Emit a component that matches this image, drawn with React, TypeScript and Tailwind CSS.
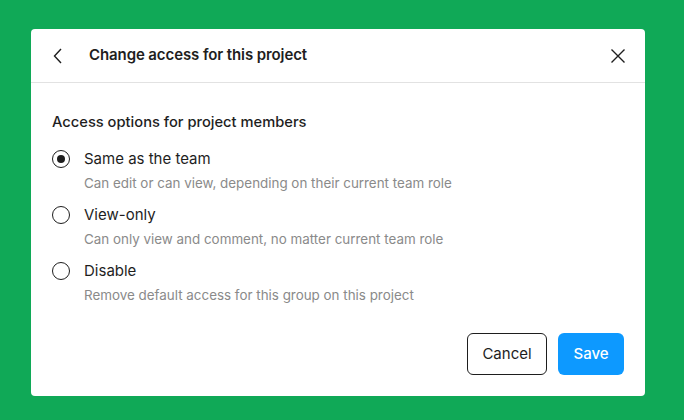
import React, { useState } from 'react';

const options = [
  { id: 'team', label: 'Same as the team', desc: 'Can edit or can view, depending on their current team role' },
  { id: 'view', label: 'View-only', desc: 'Can only view and comment, no matter current team role' },
  { id: 'disable', label: 'Disable', desc: 'Remove default access for this group on this project' },
];

const App: React.FC = () => {
  const [selected, setSelected] = useState('team');

  return (
    <div className="w-[684px] h-[420px] bg-[#10a957] pt-[29px] pl-[31px] font-['Inter',sans-serif]">
      <div className="w-[614px] h-[367px] bg-white rounded-[4px] flex flex-col">
        <div className="h-[54px] flex items-center border-b border-[#e2e2e2] pl-[20px] pr-[18px]">
          <button className="w-[14px] h-[20px] flex items-center justify-center text-[#1e1e1e]">
            <svg width="10" height="16" viewBox="0 0 10 16" fill="none" stroke="currentColor" strokeWidth="1.4">
              <path d="M8 1 L1.5 8 L8 15" />
            </svg>
          </button>
          <h1 className="ml-[24px] text-[15px] font-semibold text-[#1e1e1e] tracking-[-0.1px]">Change access for this project</h1>
          <button className="ml-auto w-[18px] h-[18px] flex items-center justify-center text-[#1e1e1e]">
            <svg width="16" height="16" viewBox="0 0 16 16" fill="none" stroke="currentColor" strokeWidth="1.4">
              <path d="M1.5 1.5 L14.5 14.5 M14.5 1.5 L1.5 14.5" />
            </svg>
          </button>
        </div>

        <div className="flex flex-col px-[21px] pt-[29px]">
          <h2 className="text-[14.7px] leading-[20px] font-medium text-[#1e1e1e]">Access options for project members</h2>
          <div className="flex flex-col gap-[11px] mt-[15px]">
            {options.map((o) => (
              <label key={o.id} className="flex flex-col cursor-pointer" onClick={() => setSelected(o.id)}>
                <div className="flex items-center h-[24px]">
                  <span className="w-[18px] h-[18px] rounded-full border-[1.5px] border-[#1e1e1e] flex items-center justify-center">
                    {selected === o.id && <span className="w-[8px] h-[8px] rounded-full bg-[#1e1e1e]" />}
                  </span>
                  <span className="ml-[14px] text-[15px] text-[#1e1e1e]">{o.label}</span>
                </div>
                <p className="mt-[3px] ml-[32px] text-[13.4px] leading-[18px] text-[#8a8a8a]">{o.desc}</p>
              </label>
            ))}
          </div>
          <div className="flex justify-end gap-[11px] mt-[29px]">
            <button className="w-[80px] h-[42px] rounded-[6px] border border-[#1e1e1e] text-[15px] text-[#1e1e1e]">Cancel</button>
            <button className="w-[66px] h-[42px] rounded-[6px] bg-[#0d99ff] text-[15px] font-medium text-white">Save</button>
          </div>
        </div>
      </div>
    </div>
  );
};

export default App;
